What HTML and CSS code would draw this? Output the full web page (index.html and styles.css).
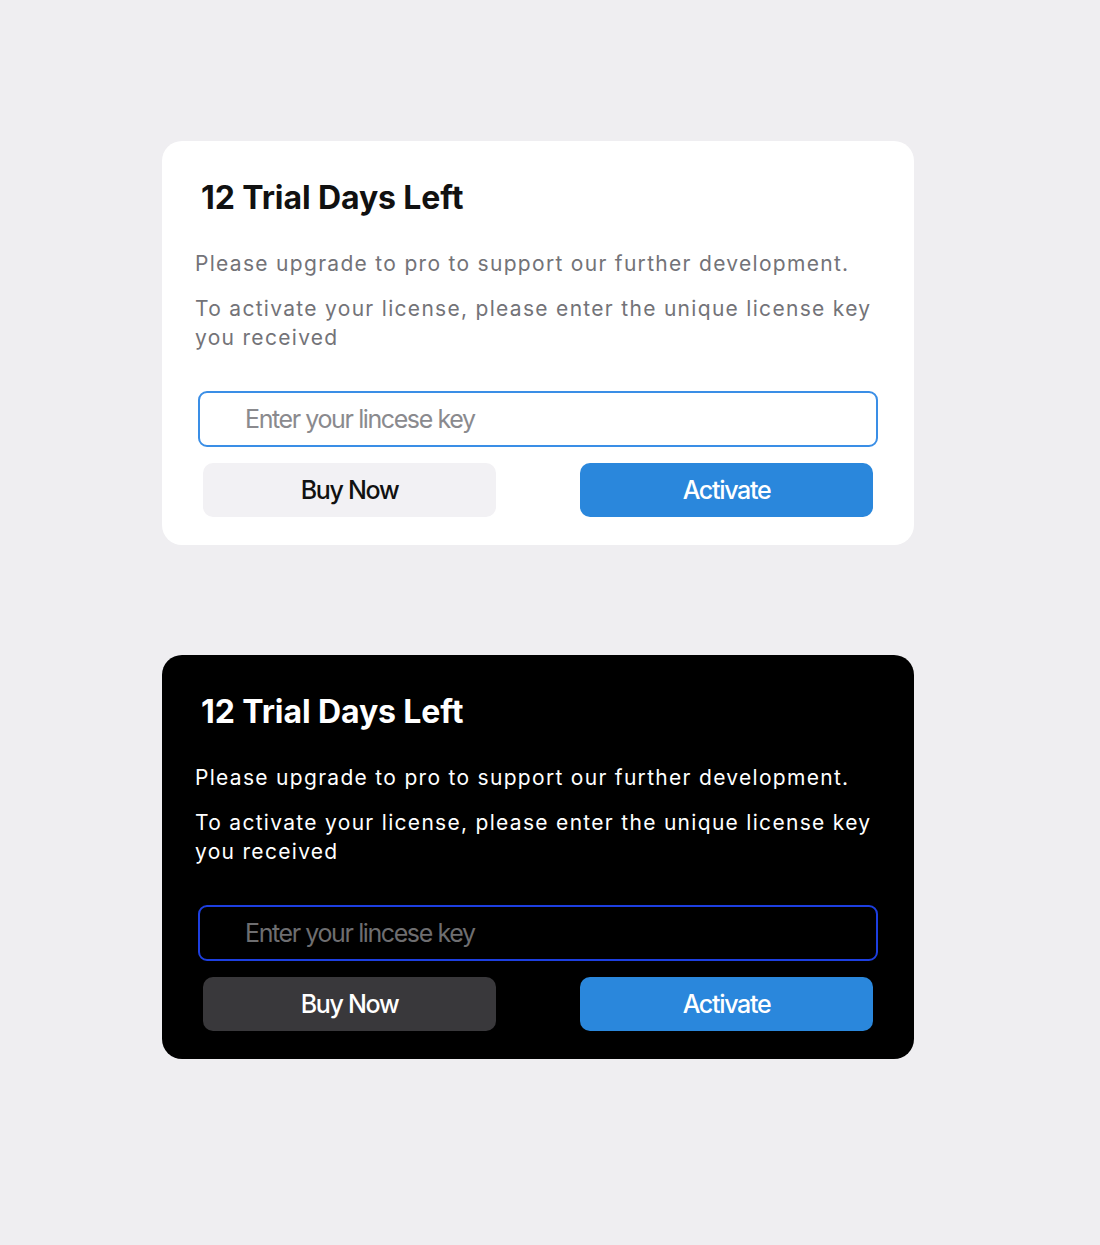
FILE: index.html
```html
<!DOCTYPE html>
<html lang="en">
<head>
<meta charset="utf-8">
<title>Trial</title>
<link rel="stylesheet" href="styles.css">
</head>
<body>
<main class="page">
  <section class="card card-light">
    <h1 class="title">12 Trial Days Left</h1>
    <p class="text text-first">Please upgrade to pro to support our further development.</p>
    <p class="text">To activate your license, please enter the unique license key you received</p>
    <input class="key" type="text" placeholder="Enter your lincese key">
    <div class="actions">
      <button class="btn btn-buy">Buy Now</button>
      <button class="btn btn-activate">Activate</button>
    </div>
  </section>
  <section class="card card-dark">
    <h1 class="title">12 Trial Days Left</h1>
    <p class="text text-first">Please upgrade to pro to support our further development.</p>
    <p class="text">To activate your license, please enter the unique license key you received</p>
    <input class="key" type="text" placeholder="Enter your lincese key">
    <div class="actions">
      <button class="btn btn-buy">Buy Now</button>
      <button class="btn btn-activate">Activate</button>
    </div>
  </section>
</main>
</body>
</html>
```
FILE: styles.css
```css
* { box-sizing: border-box; }
html, body { margin: 0; padding: 0; }
body {
  background: #efeef1;
  font-family: Inter, "Noto Sans", sans-serif;
  min-height: 1245px;
}
.page {
  display: flex;
  flex-direction: column;
  gap: 110px;
  padding: 141px 0 0 162px;
}
.card {
  width: 752px;
  border-radius: 20px;
  padding: 37px 36px 28px 36px;
  display: flex;
  flex-direction: column;
}
.card-light { background: #ffffff; }
.card-dark { background: #000000; }
.title {
  margin: 0;
  padding-left: 3px;
  font-size: 32px;
  line-height: 40px;
  font-weight: 700;
  letter-spacing: -0.1px;
}
.card-light .title { color: #111111; }
.card-dark .title { color: #ffffff; }
.text {
  margin: 16px 0 0 -3px;
  font-size: 21px;
  line-height: 29px;
  font-weight: 400;
  letter-spacing: 1.3px;
}
.text-first { margin-top: 31px; }
.card-light .text { color: #737378; }
.card-dark .text { color: #ffffff; }
.key {
  display: block;
  margin-top: 39px;
  width: 680px;
  height: 56px;
  border-radius: 9px;
  padding: 0 0 0 45px;
  font-family: Inter, sans-serif;
  font-size: 25px;
  letter-spacing: -1.4px;
  outline: none;
}
.card-light .key { border: 2px solid #3a8ee6; background: #ffffff; color: #222; }
.card-light .key::placeholder { color: #8a8a8e; }
.card-dark .key { border: 2px solid #1d3fe0; background: #000000; color: #fff; }
.card-dark .key::placeholder { color: #6e6e70; }
.actions {
  margin-top: 16px;
  padding: 0 5px;
  display: flex;
  justify-content: space-between;
}
.btn {
  width: 293px;
  height: 54px;
  border: none;
  border-radius: 10px;
  font-family: Inter, sans-serif;
  font-size: 25px;
  font-weight: 500;
  letter-spacing: -1.3px;
  padding: 0;
  cursor: pointer;
}
.card-light .btn-buy { background: #f2f1f4; color: #111111; }
.card-dark .btn-buy { background: #39383b; color: #ffffff; }
.btn-activate { background: #2a87dc; color: #ffffff; }
```
